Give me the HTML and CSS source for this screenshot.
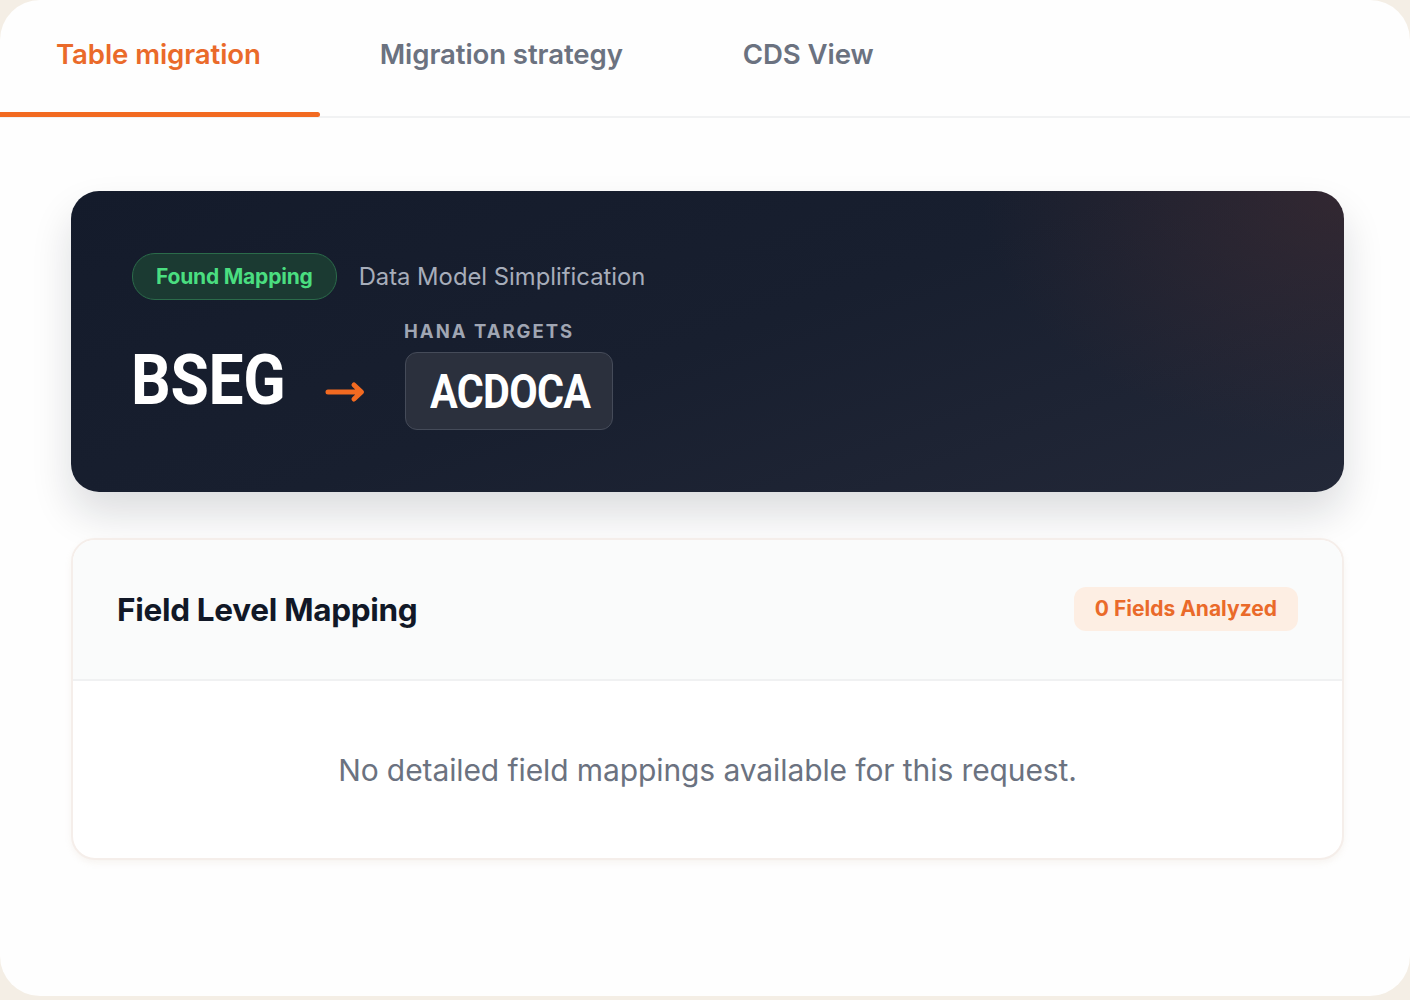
FILE: index.html
```html
<!DOCTYPE html>
<html>
<head>
<meta charset="utf-8">
<link rel="stylesheet" href="styles.css">
</head>
<body>
<div class="panel">
  <nav class="tabs">
    <div class="tab active">Table migration</div>
    <div class="tab">Migration strategy</div>
    <div class="tab">CDS View</div>
  </nav>
  <main class="content">
    <section class="hero">
      <div class="hero-top">
        <span class="pill">Found Mapping</span>
        <span class="subtitle">Data Model Simplification</span>
      </div>
      <div class="hero-row">
        <div class="source"><span class="squeeze">BSEG</span></div>
        <div class="arrow">
          <svg width="42" height="22" viewBox="0 0 42 22"><path d="M3 11 H36 M29 4 L36.5 11 L29 18" fill="none" stroke="#f26a21" stroke-width="5" stroke-linecap="round" stroke-linejoin="round"/></svg>
        </div>
        <div class="targets">
          <div class="targets-label">HANA TARGETS</div>
          <div class="target-box"><span class="squeeze">ACDOCA</span></div>
        </div>
      </div>
    </section>
    <section class="fields">
      <header class="fields-head">
        <h2>Field Level Mapping</h2>
        <span class="count">0 Fields Analyzed</span>
      </header>
      <div class="fields-body">No detailed field mappings available for this request.</div>
    </section>
  </main>
</div>
</body>
</html>
```

FILE: styles.css
```css
html, body {
  margin: 0;
  padding: 0;
}
body {
  background: #f4eee5;
  font-family: Inter, "Noto Sans", sans-serif;
  width: 1410px;
  height: 1000px;
  overflow: hidden;
}
.panel {
  background: #fefefe;
  width: 1410px;
  height: 996px;
  border-radius: 40px;
  overflow: hidden;
}
.tabs {
  display: flex;
  height: 116px;
  border-bottom: 2px solid #f1f2f3;
  box-sizing: content-box;
}
.tab {
  padding: 37px 60px 0 60px;
  font-size: 27.6px;
  font-weight: 600;
  color: #6b7280;
  letter-spacing: -0.1px;
  position: relative;
}
.tab.active {
  color: #ea6a2a;
  padding-left: 56px;
  padding-right: 59px;
}
.tab.active::after {
  content: "";
  position: absolute;
  left: 0;
  right: 0;
  bottom: -1px;
  height: 5px;
  background: #f26a21;
  border-radius: 0 3px 3px 0;
}
.content {
  padding: 73px 66px 0 71px;
}
.hero {
  height: 301px;
  box-sizing: border-box;
  border-radius: 28px;
  background:
    radial-gradient(ellipse 520px 360px at 100% 0%, rgba(70, 45, 50, 0.55), rgba(40, 35, 45, 0) 70%),
    linear-gradient(160deg, #141b2b 0%, #181f2f 50%, #232838 100%);
  box-shadow: 0 22px 40px rgba(15, 20, 35, 0.14);
  padding: 62px 61px 0 61px;
}
.hero-top {
  display: flex;
  align-items: center;
  gap: 22px;
}
.pill {
  display: inline-flex;
  align-items: center;
  height: 45px;
  padding: 0 23px;
  border-radius: 23px;
  border: 1.5px solid #2b6b4a;
  background: #1b3a32;
  color: #4ade80;
  font-size: 21px;
  font-weight: 700;
  letter-spacing: -0.2px;
}
.subtitle {
  color: #a7adba;
  font-size: 23.8px;
  font-weight: 400;
  letter-spacing: 0;
}
.hero-row {
  display: flex;
  align-items: flex-start;
  margin-top: 20px;
}
.squeeze {
  display: inline-block;
  transform: scaleX(0.89);
  transform-origin: left center;
  white-space: nowrap;
}
.source {
  font-family: Roboto, "Liberation Sans", sans-serif;
  font-weight: 700;
  font-size: 70px;
  line-height: 1;
  color: #ffffff;
  letter-spacing: -0.3px;
  margin-top: 25px;
  margin-left: -1px;
  width: 194px;
}
.arrow {
  margin-top: 61px;
  width: 80px;
  height: 22px;
  line-height: 0;
}
.targets-label {
  color: #a0a6b3;
  font-size: 18.5px;
  font-weight: 700;
  letter-spacing: 2px;
  line-height: 22px;
  margin-left: -1px;
}
.target-box {
  margin-top: 10px;
  width: 208px;
  height: 78px;
  box-sizing: border-box;
  border: 1.5px solid #454b59;
  background: #2b303d;
  border-radius: 12px;
  display: flex;
  align-items: center;
  padding-left: 24px;
  font-family: Roboto, "Liberation Sans", sans-serif;
  font-weight: 700;
  font-size: 48px;
  color: #ffffff;
  letter-spacing: -0.8px;
}
.target-box .squeeze {
  transform: scaleX(0.86);
}
.fields {
  margin-top: 46px;
  border: 2px solid #f5eeea;
  border-radius: 24px;
  overflow: hidden;
  background: #ffffff;
  box-shadow: 0 3px 6px rgba(200, 170, 150, 0.12);
}
.fields-head {
  display: flex;
  align-items: center;
  justify-content: space-between;
  height: 141px;
  box-sizing: border-box;
  padding: 0 44px 0 44px;
  background: #fafbfb;
  border-bottom: 2px solid #f0f1f2;
}
.fields-head h2 {
  margin: 0;
  font-size: 31.5px;
  font-weight: 700;
  color: #111827;
  letter-spacing: -0.3px;
}
.count {
  display: inline-flex;
  align-items: center;
  height: 44px;
  padding: 0 21px;
  border-radius: 12px;
  background: #fdeee3;
  color: #ea6a2a;
  font-size: 21px;
  font-weight: 700;
  margin-top: -2px;
}
.fields-body {
  height: 177px;
  display: flex;
  align-items: center;
  justify-content: center;
  color: #6b7280;
  font-size: 30px;
  letter-spacing: -0.1px;
}
```
